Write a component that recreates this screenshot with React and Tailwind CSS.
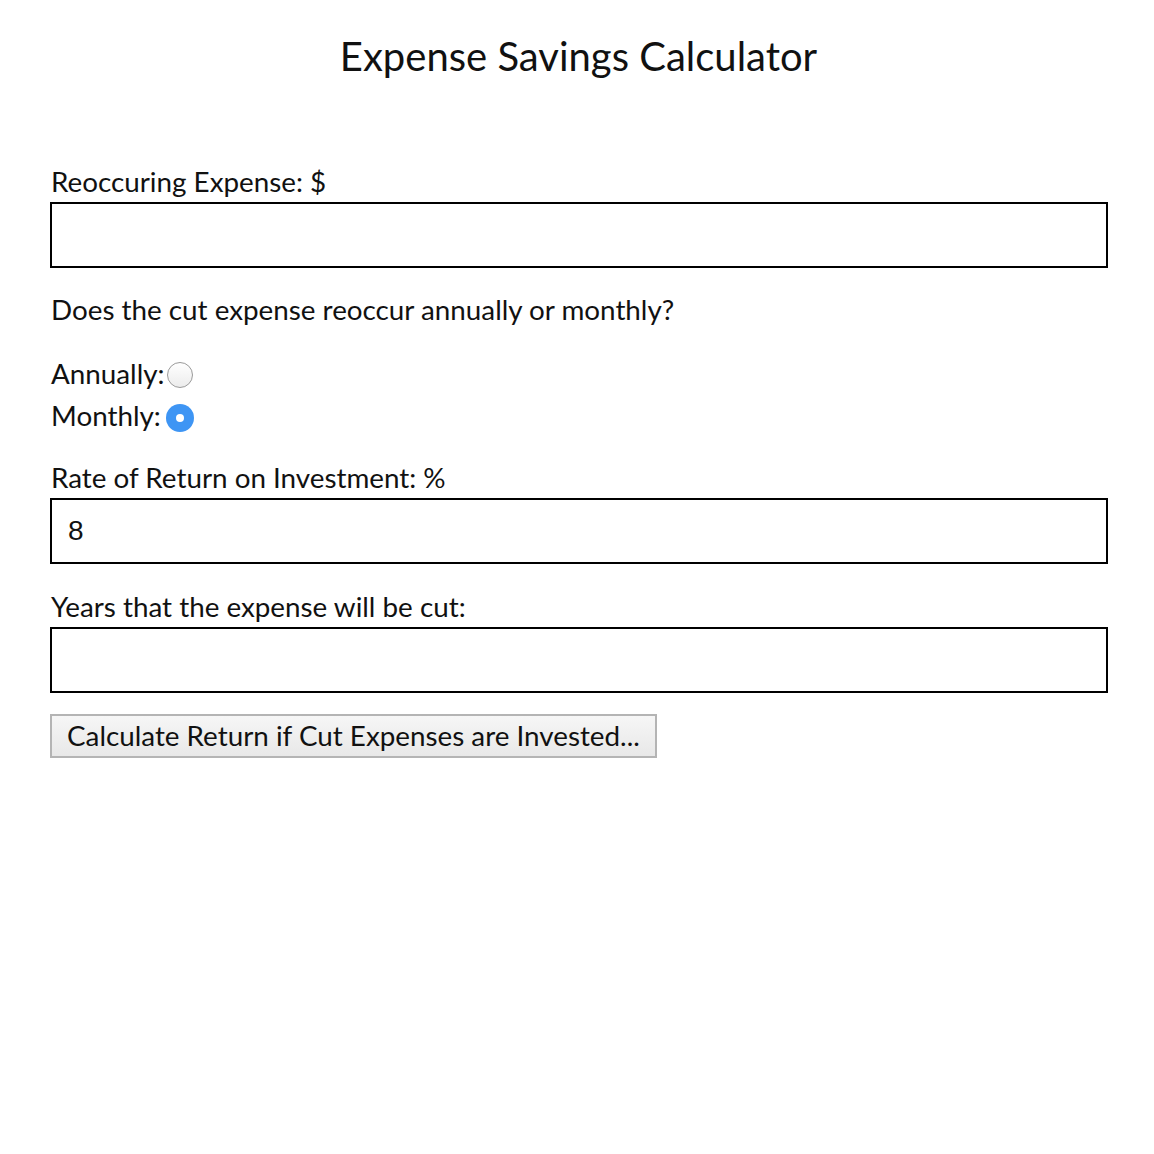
import React from "react";

export default function App() {
  return (
    <div className="min-h-[1154px] w-[1154px] bg-white text-black font-['Lato',sans-serif]">
      <h1 className="pl-[3px] pt-[30px] text-center text-[40px] leading-[52px] text-[#111]">
        Expense Savings Calculator
      </h1>
      <div className="pl-[50px] pr-[46px] pt-[83px]">
        <label className="block pl-px text-[27.8px] leading-[34px] text-[#111]">Reoccuring Expense: $</label>
        <input
          type="text"
          className="mt-[3px] block h-[66px] w-full border-2 border-black bg-white px-[16px] font-['Liberation_Sans',sans-serif] text-[28px] outline-none"
        />
        <p className="mt-[25px] pl-px text-[27.8px] leading-[34px] text-[#111]">
          Does the cut expense reoccur annually or monthly?
        </p>
        <div className="mt-[30px] flex items-center pl-px text-[27.8px] leading-[34px] text-[#111]">
          <span>Annually:</span>
          <span className="ml-[2px] mt-[1px] inline-block h-[26px] w-[26px] rounded-full border border-[#9a9a9a] bg-gradient-to-b from-white to-[#ececec]" />
        </div>
        <div className="mt-[8px] flex items-center pl-px text-[27.8px] leading-[34px] text-[#111]">
          <span>Monthly:</span>
          <span className="ml-[5px] mt-[4px] flex h-[28px] w-[28px] items-center justify-center rounded-full bg-[#3e95f4]">
            <span className="h-[8px] w-[8px] rounded-full bg-white" />
          </span>
        </div>
        <label className="mt-[28px] block pl-px text-[27.8px] leading-[34px] text-[#111]">
          Rate of Return on Investment: %
        </label>
        <input
          type="text"
          defaultValue="8"
          className="mt-[3px] block h-[66px] w-full border-2 border-black bg-white px-[16px] font-['Liberation_Sans',sans-serif] text-[28px] text-[#111] outline-none"
        />
        <label className="mt-[26px] block pl-px text-[27.8px] leading-[34px] text-[#111]">
          Years that the expense will be cut:
        </label>
        <input
          type="text"
          className="mt-[3px] block h-[66px] w-full border-2 border-black bg-white px-[16px] font-['Liberation_Sans',sans-serif] text-[28px] outline-none"
        />
        <button className="mt-[21px] block h-[44px] border-2 border-[#b4b4b4] bg-gradient-to-b from-[#f6f6f6] to-[#e8e8e8] px-[15px] text-[27.8px] leading-[38px] text-[#111]">
          Calculate Return if Cut Expenses are Invested...
        </button>
      </div>
    </div>
  );
}
